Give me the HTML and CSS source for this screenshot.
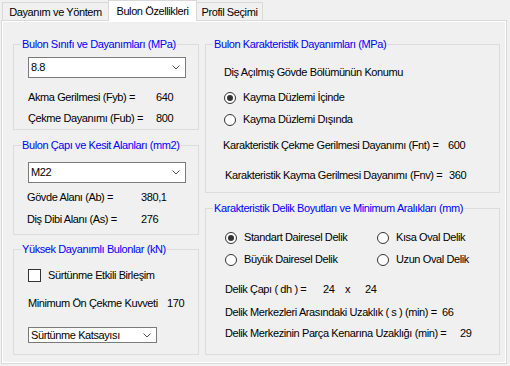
FILE: index.html
```html
<!DOCTYPE html>
<html lang="tr">
<head>
<meta charset="utf-8">
<title>Bulon Özellikleri</title>
<link rel="stylesheet" href="styles.css">
</head>
<body>
<div class="window">
  <div class="tabs">
    <div class="tab tab-1">Dayanım ve Yöntem</div>
    <div class="tab tab-2 active">Bulon Özellikleri</div>
    <div class="tab tab-3">Profil Seçimi</div>
  </div>
  <div class="page">
    <div class="col col-left">
      <fieldset class="group g-sinif">
        <legend>Bulon Sınıfı ve Dayanımları (MPa)</legend>
        <div class="gbody pad-14">
          <div class="combo combo-wide sinif-combo"><span class="combo-text">8.8</span><svg class="chev" width="8" height="5" viewBox="0 0 8 5"><polyline points="0.5,0.5 4,4 7.5,0.5" fill="none" stroke="#505050" stroke-width="1"/></svg></div>
          <div class="line sinif-r1"><span class="lbl w-128">Akma Gerilmesi (Fyb) =</span><span>640</span></div>
          <div class="line sinif-r2"><span class="lbl w-128">Çekme Dayanımı (Fub) =</span><span>800</span></div>
        </div>
      </fieldset>
      <fieldset class="group g-cap">
        <legend>Bulon Çapı ve Kesit Alanları (mm2)</legend>
        <div class="gbody pad-13">
          <div class="combo combo-wide cap-combo"><span class="combo-text">M22</span><svg class="chev" width="8" height="5" viewBox="0 0 8 5"><polyline points="0.5,0.5 4,4 7.5,0.5" fill="none" stroke="#505050" stroke-width="1"/></svg></div>
          <div class="line cap-r1"><span class="lbl w-114">Gövde Alanı (Ab) =</span><span>380,1</span></div>
          <div class="line cap-r2"><span class="lbl w-114">Diş Dibi Alanı (As) =</span><span>276</span></div>
        </div>
      </fieldset>
      <fieldset class="group g-yuksek">
        <legend>Yüksek Dayanımlı Bulonlar (kN)</legend>
        <div class="gbody pad-14">
          <div class="line yuksek-r1"><span class="check"></span><span class="check-text">Sürtünme Etkili Birleşim</span></div>
          <div class="line yuksek-r2"><span class="lbl w-139">Minimum Ön Çekme Kuvveti</span><span>170</span></div>
          <div class="combo combo-small yuksek-combo"><span class="combo-text">Sürtünme Katsayısı</span><svg class="chev" width="8" height="5" viewBox="0 0 8 5"><polyline points="0.5,0.5 4,4 7.5,0.5" fill="none" stroke="#505050" stroke-width="1"/></svg></div>
        </div>
      </fieldset>
    </div>
    <div class="col col-right">
      <fieldset class="group g-karakter">
        <legend>Bulon Karakteristik Dayanımları (MPa)</legend>
        <div class="gbody pad-18">
          <div class="line kar-r1">Diş Açılmış Gövde Bölümünün Konumu</div>
          <div class="line kar-r2"><span class="radio on"></span><span class="radio-text">Kayma Düzlemi İçinde</span></div>
          <div class="line kar-r3"><span class="radio"></span><span class="radio-text">Kayma Düzlemi Dışında</span></div>
          <div class="line kar-r4"><span class="lbl w-225">Karakteristik Çekme Gerilmesi Dayanımı (Fnt) =</span><span>600</span></div>
          <div class="line kar-r5"><span class="lbl w-224">Karakteristik Kayma Gerilmesi Dayanımı (Fnv) =</span><span>360</span></div>
        </div>
      </fieldset>
      <fieldset class="group g-delik">
        <legend>Karakteristik Delik Boyutları ve Minimum Aralıkları (mm)</legend>
        <div class="gbody pad-19">
          <div class="radio-grid del-r1">
            <div class="line"><span class="radio on"></span><span class="radio-text">Standart Dairesel Delik</span></div>
            <div class="line"><span class="radio"></span><span class="radio-text">Kısa Oval Delik</span></div>
          </div>
          <div class="radio-grid del-r2">
            <div class="line"><span class="radio"></span><span class="radio-text">Büyük Dairesel Delik</span></div>
            <div class="line"><span class="radio"></span><span class="radio-text">Uzun Oval Delik</span></div>
          </div>
          <div class="line del-r3"><span class="lbl w-98">Delik Çapı ( dh ) =</span><span class="lbl w-22">24</span><span class="lbl w-20">x</span><span>24</span></div>
          <div class="line del-r4"><span class="lbl w-217">Delik Merkezleri Arasındaki Uzaklık ( s ) (min) =</span><span>66</span></div>
          <div class="line del-r5"><span class="lbl w-235">Delik Merkezinin Parça Kenarına Uzaklığı (min) =</span><span>29</span></div>
        </div>
      </fieldset>
    </div>
  </div>
</div>
</body>
</html>
```

FILE: styles.css
```css
html, body {
  margin: 0;
  padding: 0;
  background: #f0f0f0;
}

body {
  font-family: "Liberation Sans", Arial, sans-serif;
  font-size: 11px;
  letter-spacing: -0.4px;
  line-height: 13px;
  color: #000;
}

.window {
  width: 510px;
  height: 366px;
  overflow: hidden;
}

/* tabs */
.tabs {
  display: flex;
  align-items: flex-end;
  height: 20px;
  padding-left: 2px;
  position: relative;
  z-index: 2;
}

.tab {
  box-sizing: border-box;
  height: 18px;
  border: 1px solid #d9d9d9;
  border-bottom: none;
  background: #f0f0f0;
  margin-right: -1px;
  display: flex;
  align-items: center;
  justify-content: center;
  padding-top: 2px;
  white-space: nowrap;
}

.tab-1 { width: 107px; }
.tab-2 { width: 89px; }
.tab-3 { width: 67px; }

.tab.active {
  height: 21px;
  margin-bottom: -1px;
  background: #fff;
  position: relative;
  z-index: 3;
  padding-top: 0;
}

/* tab page */
.page {
  box-sizing: border-box;
  margin-left: 1px;
  width: 506px;
  height: 344px;
  border: 1px solid #d9d9d9;
  box-shadow: inset 0 0 0 1px #fff;
  display: flex;
  gap: 6px;
  padding: 17px 6px 0 11px;
}

.col {
  display: flex;
  flex-direction: column;
}

.col-left { width: 186px; }
.col-right { width: 295px; }

/* group boxes */
.group {
  box-sizing: border-box;
  margin: 0;
  padding: 0;
  min-width: 0;
  border: 1px solid #dcdcdc;
}

.group legend {
  margin-left: 7px;
  padding: 0 1px;
  color: #0000ff;
  line-height: 13px;
  white-space: nowrap;
}

.g-sinif { height: 92px; }
.g-cap { height: 96px; margin-top: 9px; }
.g-yuksek { height: 112px; margin-top: 8px; }
.g-karakter { height: 155px; }
.g-delik { height: 153px; margin-top: 9px; }

.gbody {
  display: flex;
  flex-direction: column;
  align-items: flex-start;
}

.pad-13 { padding-left: 13px; }
.pad-14 { padding-left: 14px; }
.pad-18 { padding-left: 18px; }
.pad-19 { padding-left: 19px; }

/* text rows */
.line {
  height: 13px;
  display: flex;
  align-items: center;
  white-space: nowrap;
}

.lbl {
  display: inline-block;
  flex: none;
}

.w-20 { width: 20px; }
.w-22 { width: 22px; }
.w-98 { width: 98px; }
.w-114 { width: 114px; }
.w-128 { width: 128px; }
.w-139 { width: 139px; }
.w-217 { width: 217px; }
.w-224 { width: 224px; }
.w-225 { width: 225px; }
.w-235 { width: 235px; }

/* combo boxes */
.combo {
  box-sizing: border-box;
  background: #fff;
  border: 1px solid #7a7a7a;
  display: flex;
  align-items: center;
  justify-content: space-between;
  padding: 0 5px 0 2px;
}

.combo-wide { width: 158px; height: 21px; }
.combo-small { width: 129px; height: 16px; }

.combo-text { white-space: nowrap; }

.chev { display: block; flex: none; }

/* checkbox & radios */
.check {
  box-sizing: border-box;
  width: 13px;
  height: 13px;
  border: 1px solid #333;
  background: #fff;
  flex: none;
}

.check-text { margin-left: 7px; }

.radio {
  box-sizing: border-box;
  width: 12px;
  height: 12px;
  border: 1px solid #333;
  border-radius: 50%;
  background: #fff;
  flex: none;
  display: flex;
  align-items: center;
  justify-content: center;
}

.radio.on::after {
  content: "";
  width: 6px;
  height: 6px;
  border-radius: 50%;
  background: #333;
}

.radio-text { margin-left: 7px; }

.radio-grid {
  display: grid;
  grid-template-columns: 152px auto;
}

/* vertical spacing */
.sinif-combo { margin-top: 6px; }
.sinif-r1 { margin-top: 13px; }
.sinif-r2 { margin-top: 8px; }

.cap-combo { margin-top: 10px; margin-left: 1px; }
.cap-r1 { margin-top: 8px; }
.cap-r2 { margin-top: 9px; }

.yuksek-r1 { margin-top: 13px; }
.yuksek-r2 { margin-top: 15px; }
.yuksek-combo { margin-top: 17px; }

.kar-r1 { margin-top: 15px; }
.kar-r2 { margin-top: 12px; }
.kar-r3 { margin-top: 9px; }
.kar-r4 { margin-top: 13px; margin-left: -1px; }
.kar-r5 { margin-top: 17px; margin-left: 1px; }

.del-r1 { margin-top: 16px; }
.del-r2 { margin-top: 9px; }
.del-r3 { margin-top: 17px; }
.del-r4 { margin-top: 10px; }
.del-r5 { margin-top: 8px; }
```
